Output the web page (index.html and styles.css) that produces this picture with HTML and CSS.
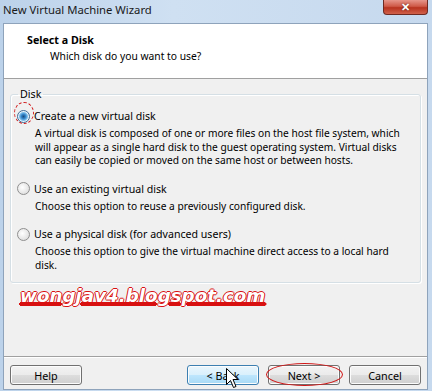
FILE: index.html
```html
<!DOCTYPE html>
<html lang="en">

<head>
    <meta charset="UTF-8">
    <title>New Virtual Machine Wizard</title>
    <link rel="stylesheet" href="styles.css">
</head>

<body>
    <div class="window">
        <div class="titlebar">
            <span class="title">New Virtual Machine Wizard</span>
            <span class="close">&#x2715;</span>
        </div>

        <div class="client">
            <div class="header">
                <div class="heading">Select a Disk</div>
                <div class="subheading">Which disk do you want to use?</div>
            </div>

            <div class="content">
                <fieldset class="group">
                    <legend>Disk</legend>

                    <div class="option">
                        <span class="radio checked"></span>
                        <span class="mark-radio"></span>
                        <span>Create a new virtual disk</span>
                    </div>
                    <p class="desc">A virtual disk is composed of one or more files on the host file system, which will appear as a single hard disk to the guest operating system. Virtual disks can easily be copied or moved on the same host or between hosts.</p>

                    <div class="option">
                        <span class="radio"></span>
                        <span>Use an existing virtual disk</span>
                    </div>
                    <p class="desc">Choose this option to reuse a previously configured disk.</p>

                    <div class="option">
                        <span class="radio"></span>
                        <span>Use a physical disk (for advanced users)</span>
                    </div>
                    <p class="desc">Choose this option to give the virtual machine direct access to a local hard disk.</p>
                </fieldset>

                <div class="watermark">wongjav4.blogspot.com</div>
            </div>

            <div class="footer">
                <button class="btn">Help</button>
                <div class="spacer"></div>
                <button class="btn hover">&lt; Back</button>
                <button class="btn next">Next &gt;</button>
                <button class="btn">Cancel</button>
            </div>
        </div>

        <!-- mouse pointer over the Back button -->
        <svg class="cursor" width="13" height="22" viewBox="0 0 13 22">
            <path d="M0.5 0.5 L0.5 16.5 L4.5 12.5 L7.5 19.5 L10 18.5 L7 11.5 L12 11.5 Z" fill="#fff" stroke="#000" stroke-width="1"/>
        </svg>
    </div>
</body>

</html>
```

FILE: styles.css
```css
body {
    margin: 0;
    padding: 0;
    font-family: "Noto Sans", "Open Sans", sans-serif;
    font-size: 10.3px;
    color: #000;
    background-color: #c4d7ec;
}

.window {
    position: relative;
    width: 432px;
    height: 391px;
    overflow: hidden;
    background: linear-gradient(to right, #bcd2ea, #cfe0f2 40%, #c6d9ee);
}

.titlebar {
    height: 23px;
    display: flex;
    align-items: flex-start;
    justify-content: space-between;
    padding-left: 3px;
    box-sizing: border-box;
}

.title {
    margin-top: 2px;
    font-size: 11.3px;
    line-height: 16px;
    color: #1a1a1a;
}

.close {
    width: 45px;
    height: 15px;
    margin-right: 4px;
    box-sizing: border-box;
    border: 1px solid #6e2a22;
    border-top: none;
    border-radius: 0 0 4px 4px;
    background: linear-gradient(#e6958a, #cf5a48 45%, #b8331f 55%, #d0614b);
    color: #fff;
    font-size: 11px;
    font-weight: bold;
    line-height: 13px;
    text-align: center;
    text-shadow: 0 0 2px #5a1a10;
}

.client {
    margin: 0 4px 0 3px;
    height: 365px;
    border: 1px solid #8ea3bb;
    background-color: #f0f0f0;
    display: flex;
    flex-direction: column;
}

.header {
    height: 54px;
    background-color: #fff;
    border-bottom: 1px solid #a0a0a0;
}

.heading {
    font-size: 10.7px;
    font-weight: bold;
    margin: 8px 0 0 23px;
    line-height: 16px;
}

.subheading {
    margin: 0 0 0 46px;
    line-height: 16px;
}

.content {
    flex: 1;
    padding: 8px 6px 0 6px;
}

.group {
    margin: 0;
    padding: 8px 4px 10px 6px;
    border: 1px solid #d5dfe5;
    border-radius: 3px;
    box-shadow: inset 1px 1px 0 #fff, 1px 1px 0 #fff;
}

.group legend {
    padding: 0 2px;
    margin-left: 1px;
    font-size: 10.7px;
    line-height: 14px;
}

.option {
    position: relative;
    display: flex;
    align-items: center;
    gap: 4px;
    font-size: 10.6px;
    line-height: 14px;
}

.radio {
    width: 11px;
    height: 11px;
    border: 1px solid #8f8f8f;
    border-radius: 50%;
    background: radial-gradient(circle at 40% 40%, #fff, #e2e2e2 70%, #cfcfcf);
    flex: none;
}

.radio.checked {
    border-color: #3d6a96;
    background: radial-gradient(circle, #1d4d7c 0, #2f7fc4 2px, #7ec0ec 4px, #e8f2fa 5px, #f4f4f4 6px);
}

.mark-radio {
    position: absolute;
    left: -3px;
    top: -7px;
    width: 18px;
    height: 20px;
    border: 1px dashed #d01818;
    border-radius: 50%;
}

.desc {
    margin: 4px 11px 14px 18px;
    font-size: 10.2px;
    line-height: 13.5px;
}

.desc:last-child {
    margin-bottom: 0;
}

.watermark {
    margin: 2px 0 0 10px;
    font-family: "DejaVu Sans", "Liberation Sans", sans-serif;
    font-size: 18.3px;
    font-weight: bold;
    font-style: italic;
    line-height: 22px;
    color: #fff;
    text-shadow: 1px 0 0 #d81010, -1px 0 0 #d81010, 0 1px 0 #d81010, 0 -1px 0 #d81010;
    text-decoration: underline;
    text-decoration-color: #d81010;
    text-decoration-thickness: 2px;
}

.footer {
    border-top: 1px solid #a0a0a0;
    box-shadow: inset 0 1px 0 #fff;
    height: 33px;
    display: flex;
    align-items: flex-start;
    gap: 9px;
    padding: 8px 6px 0 6px;
    box-sizing: border-box;
}

.spacer {
    flex: 1;
}

.btn {
    position: relative;
    width: 72px;
    height: 20px;
    padding: 0;
    font-family: "Noto Sans", "Open Sans", sans-serif;
    font-size: 10.8px;
    color: #000;
    border: 1px solid #707070;
    border-radius: 3px;
    background: linear-gradient(#f2f2f2, #ebebeb 50%, #dddddd 51%, #cfcfcf);
    box-shadow: inset 0 0 0 1px #fcfcfc;
}

.btn.hover {
    border-color: #3c7fb1;
    background: linear-gradient(#eaf6fd, #d9f0fc 50%, #bee6fd 51%, #a7d9f5);
}

.next::after {
    content: "";
    position: absolute;
    left: -3px;
    top: -3px;
    width: 75px;
    height: 21px;
    border: 1px solid #d01818;
    border-radius: 50%;
}

.cursor {
    position: absolute;
    left: 226px;
    top: 368px;
}
```
